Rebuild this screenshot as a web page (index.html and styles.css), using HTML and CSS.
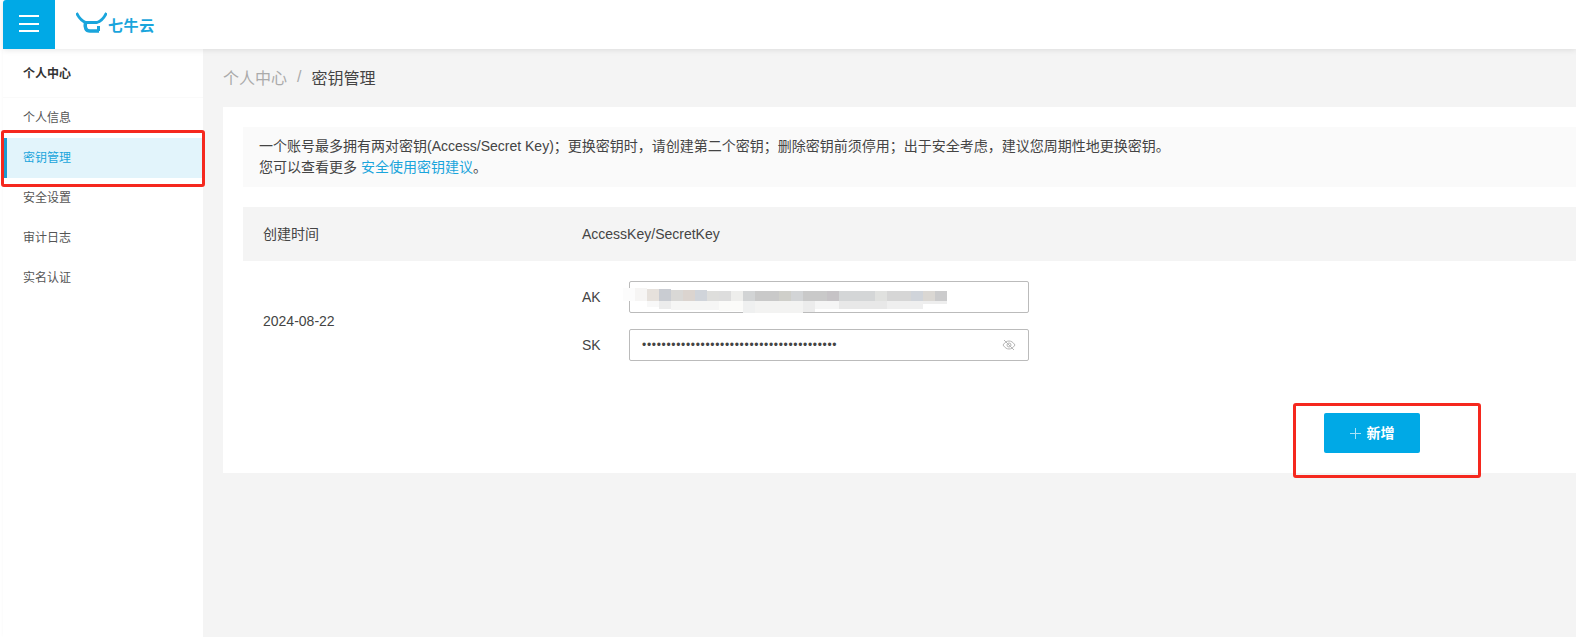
FILE: index.html
```html
<!DOCTYPE html>
<html lang="en">
<head>
<meta charset="UTF-8">
<meta name="viewport" content="width=device-width, initial-scale=1.0">
<title>密钥管理</title>
<link rel="stylesheet" href="styles.css">
</head>
<body>
  <header class="topbar">
    <button class="menu-btn" aria-label="menu">
      <span></span><span></span><span></span>
    </button>
    <div class="logo">
      <svg width="31" height="21" viewBox="0 0 31 21" fill="none" stroke="#1aa5dc" stroke-width="3.6">
        <path d="M0.5 1C3 6 6 9.5 10 10.5H21C25 9.5 28 6 30.5 1" stroke-width="2.8"/>
        <path d="M9.5 10C8.5 16 10 19 14 19H23"/>
        <path d="M22.5 19V14" stroke-width="3"/>
      </svg>
      <span class="logo-text">七牛云</span>
    </div>
  </header>

  <div class="layout">
    <aside class="sidebar">
      <div class="sidebar-title">个人中心</div>
      <nav>
        <a class="nav-item">个人信息</a>
        <a class="nav-item active">密钥管理</a>
        <a class="nav-item">安全设置</a>
        <a class="nav-item">审计日志</a>
        <a class="nav-item">实名认证</a>
      </nav>
    </aside>

    <main class="main">
      <div class="breadcrumb">
        <span class="crumb-parent">个人中心</span>
        <span class="crumb-sep">/</span>
        <span>密钥管理</span>
      </div>

      <section class="card">
        <div class="notice">
          <p>一个账号最多拥有两对密钥(Access/Secret Key)；更换密钥时，请创建第二个密钥；删除密钥前须停用；出于安全考虑，建议您周期性地更换密钥。</p>
          <p>您可以查看更多 <a class="link">安全使用密钥建议</a>。</p>
        </div>

        <div class="table-head">
          <div class="col-date">创建时间</div>
          <div>AccessKey/SecretKey</div>
        </div>

        <div class="table-row">
          <div class="col-date">2024-08-22</div>
          <div class="keys">
            <div class="key-line">
              <label>AK</label>
              <div class="key-input"></div>
            </div>
            <div class="key-line">
              <label>SK</label>
              <div class="key-input">
                <span class="dots">••••••••••••••••••••••••••••••••••••••••</span>
                <svg class="eye" width="14" height="14" viewBox="0 0 14 14" fill="none" stroke="#b5b5b5" stroke-width="1">
                  <path d="M1 7C3 4 5 3 7 3S11 4 13 7C11 10 9 11 7 11S3 10 1 7Z"/>
                  <circle cx="7" cy="7" r="2"/>
                  <path d="M2 2L12 12"/>
                </svg>
              </div>
            </div>
          </div>
        </div>

        <div class="actions">
          <button class="add-btn"><span class="plus"></span>新增</button>
        </div>
      </section>
    </main>
  </div>

  <!-- blurred out key, lies over the AK input -->
  <svg class="blur-patch" width="326" height="26" viewBox="0 0 326 26">
    <g>
      <rect x="0" y="0" width="12" height="13" fill="#fcfcfc"/>
      <rect x="12" y="0" width="12" height="13" fill="#f6f5f4"/>
      <rect x="24" y="1" width="12" height="12" fill="#e6e1dc"/>
      <rect x="36" y="1" width="12" height="12" fill="#c9ccd2"/>
      <rect x="48" y="2" width="12" height="11" fill="#d9d8d6"/>
      <rect x="60" y="2" width="12" height="11" fill="#dbd4cf"/>
      <rect x="72" y="2" width="12" height="11" fill="#d0d4da"/>
      <rect x="84" y="3" width="12" height="10" fill="#dededc"/>
      <rect x="96" y="3" width="12" height="10" fill="#dddddd"/>
      <rect x="108" y="3" width="12" height="10" fill="#eeeeec"/>
      <rect x="120" y="3" width="12" height="10" fill="#d2d4d5"/>
      <rect x="132" y="3" width="24" height="10" fill="#c9c9c9"/>
      <rect x="156" y="3" width="12" height="10" fill="#cfcfca"/>
      <rect x="168" y="3" width="12" height="10" fill="#d2d4d6"/>
      <rect x="180" y="3" width="24" height="10" fill="#c9c9c9"/>
      <rect x="204" y="3" width="12" height="10" fill="#c6c3c6"/>
      <rect x="216" y="3" width="36" height="10" fill="#d4d6d7"/>
      <rect x="252" y="3" width="12" height="10" fill="#e0e1df"/>
      <rect x="264" y="3" width="24" height="10" fill="#d6d6d6"/>
      <rect x="288" y="3" width="12" height="10" fill="#d0d4da"/>
      <rect x="300" y="3" width="12" height="10" fill="#dad7d3"/>
      <rect x="312" y="3" width="12" height="10" fill="#cbcbcc"/>
      <rect x="24" y="13" width="12" height="6" fill="#f8f8f8"/>
      <rect x="36" y="13" width="12" height="8" fill="#ececec"/>
      <rect x="48" y="13" width="48" height="9" fill="#f6f6f5"/>
      <rect x="96" y="13" width="24" height="10" fill="#fbfbf9"/>
      <rect x="120" y="13" width="12" height="12" fill="#eff0f0"/>
      <rect x="132" y="13" width="48" height="12" fill="#f3f3f2"/>
      <rect x="180" y="13" width="12" height="11" fill="#ececec"/>
      <rect x="192" y="13" width="24" height="8" fill="#f5f5f5"/>
      <rect x="216" y="13" width="48" height="8" fill="#e8e8e8"/>
      <rect x="264" y="13" width="36" height="8" fill="#efefef"/>
      <rect x="300" y="13" width="24" height="3" fill="#eeeeee"/>
    </g>
  </svg>

  <div class="mark mark-nav"></div>
  <div class="mark mark-add"></div>
</body>
</html>
```

FILE: styles.css
```css
* {
  box-sizing: border-box;
}

html, body {
  height: 100%;
}

body {
  margin: 0;
  padding-left: 3px;
  overflow: hidden;
  position: relative;
  background-color: #fff;
  color: #333;
  font-family: "Liberation Sans", "Noto Sans CJK SC", sans-serif;
  font-size: 14px;
}

p {
  margin: 0;
}

.topbar {
  position: relative;
  z-index: 2;
  display: flex;
  align-items: center;
  height: 49px;
  background-color: #fff;
  box-shadow: 0 1px 6px rgba(0, 0, 0, 0.1);
}

.menu-btn {
  display: flex;
  flex-direction: column;
  justify-content: center;
  gap: 5.5px;
  width: 52px;
  height: 49px;
  padding: 0 16px 2px;
  border: none;
  border-top-left-radius: 3px;
  background-color: #00a9e6;
}

.menu-btn span {
  display: block;
  height: 2px;
  background-color: #fff;
}

.logo {
  display: flex;
  align-items: center;
  gap: 1px;
  margin-left: 21px;
  margin-top: -4px;
}

.logo-text {
  margin-top: 3px;
  color: #1aa5dc;
  font-size: 15px;
  font-weight: bold;
  letter-spacing: 0.6px;
}

.layout {
  display: flex;
  height: calc(100% - 49px);
}

.sidebar {
  flex: none;
  width: 200px;
  background-color: #fff;
  box-shadow: 1px 0 4px rgba(0, 0, 0, 0.05);
  font-size: 12px;
}

.sidebar-title {
  height: 49px;
  padding: 15px 20px 0;
  color: #333;
  font-size: 12px;
  font-weight: bold;
  border-bottom: 1px solid #fafafa;
}

.nav-item {
  display: flex;
  align-items: center;
  height: 40px;
  padding-left: 20px;
  padding-bottom: 3px;
  color: #555;
}

.nav-item.active {
  padding-left: 16px;
  border-left: 4px solid #1d9bd1;
  background-color: #e2f4fb;
  color: #1aa5dc;
}

.main {
  flex: 1;
  min-width: 0;
  padding-left: 20px;
  background-color: #f4f4f4;
}

.breadcrumb {
  display: flex;
  align-items: center;
  gap: 10px;
  height: 58px;
  padding-bottom: 3px;
  font-size: 16px;
  color: #444;
}

.crumb-parent, .crumb-sep {
  color: #aaa;
}

.card {
  height: 366px;
  padding: 20px 0 0 20px;
  background-color: #fff;
}

.notice {
  height: 60px;
  padding: 9px 16px;
  background-color: #fafafa;
  color: #444;
  font-size: 14px;
  line-height: 21px;
}

.link {
  color: #1aa5dc;
}

.table-head {
  display: flex;
  align-items: center;
  height: 54px;
  margin-top: 20px;
  background-color: #f4f4f4;
  color: #444;
  font-size: 14px;
}

.col-date {
  flex: none;
  width: 339px;
  padding-left: 20px;
  color: #444;
}

.table-head .col-date {
  padding-bottom: 2px;
}

.table-row {
  display: flex;
  align-items: center;
  height: 120px;
}

.keys {
  display: flex;
  flex-direction: column;
  gap: 16px;
}

.key-line {
  display: flex;
  align-items: center;
}

.key-line label {
  width: 47px;
  color: #444;
}

.key-input {
  display: flex;
  align-items: center;
  justify-content: space-between;
  width: 400px;
  height: 32px;
  padding: 0 12px;
  border: 1px solid #bbb;
  border-radius: 2px;
}

.dots {
  color: #444;
  font-size: 12px;
  letter-spacing: 0.68px;
}

.eye {
  flex: none;
}

.actions {
  display: flex;
  margin-top: 32px;
  padding-left: 1081px;
}

.add-btn {
  display: flex;
  align-items: center;
  justify-content: center;
  gap: 6px;
  width: 96px;
  height: 40px;
  padding-bottom: 3px;
  border: none;
  border-radius: 2px;
  background-color: #00a9e6;
  color: #fff;
  font-family: inherit;
  font-size: 14px;
  font-weight: bold;
}

/* plus sign drawn with two gradients */
.plus {
  flex: none;
  width: 11px;
  height: 11px;
  margin-top: 3px;
  background:
    linear-gradient(#a8e2f7, #a8e2f7) center / 100% 1px no-repeat,
    linear-gradient(#a8e2f7, #a8e2f7) center / 1px 100% no-repeat;
}

.blur-patch {
  position: absolute;
  left: 623px;
  top: 288px;
}

.mark {
  position: absolute;
  border: 3px solid #f5281e;
  border-radius: 3px;
}

.mark-nav {
  left: 1px;
  top: 130px;
  width: 204px;
  height: 57px;
}

.mark-add {
  left: 1293px;
  top: 403px;
  width: 188px;
  height: 75px;
}
```
